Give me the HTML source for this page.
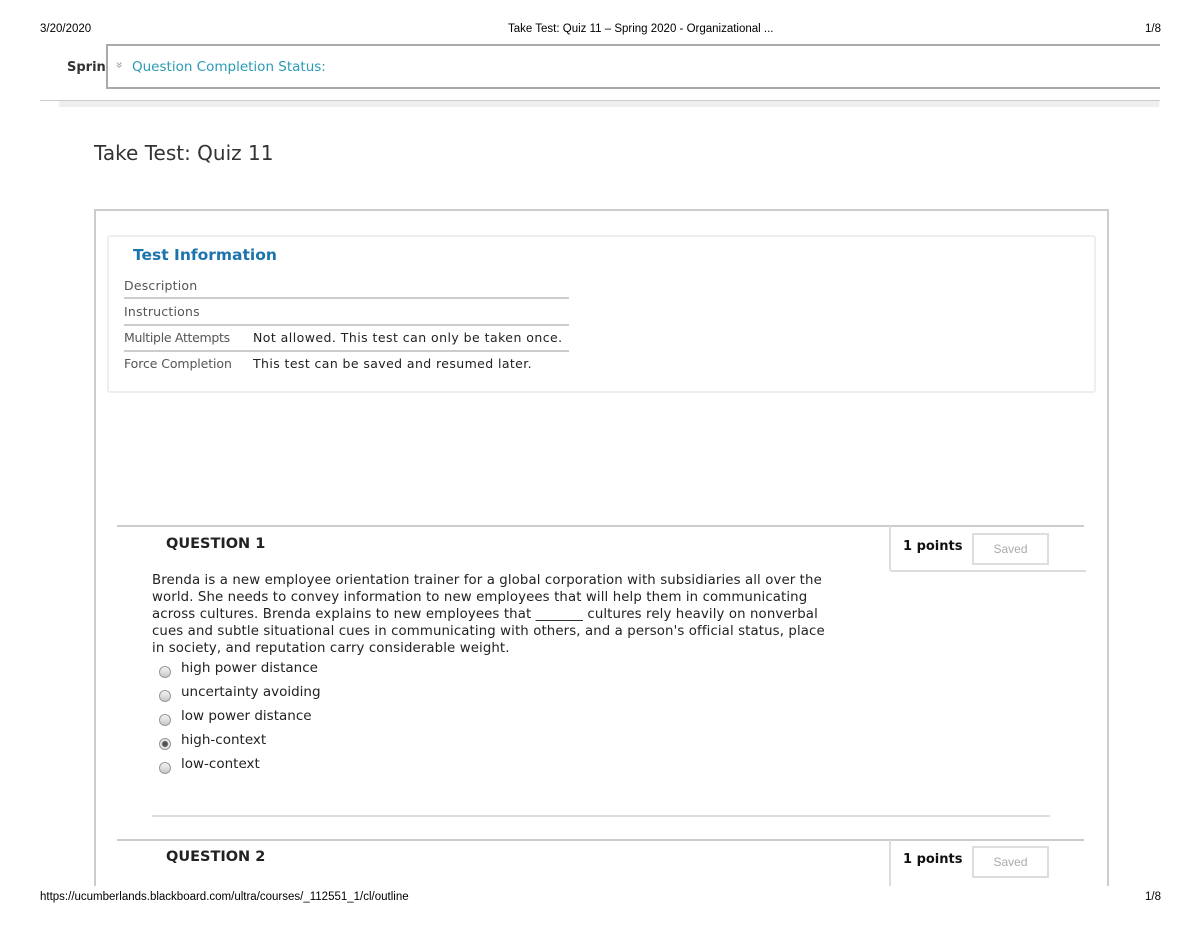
<!DOCTYPE html>
<html><head><style>
html,body{margin:0;width:1200px;height:927px;overflow:hidden}
body{position:relative;background:#fff;font-family:"DejaVu Sans","Liberation Sans",sans-serif}
.a{position:absolute;white-space:nowrap}
.hd{font-family:"Liberation Sans",sans-serif;font-size:11.5px;color:#000}
.r{position:absolute;width:10px;height:10px;border-radius:50%;border:1px solid #999;background:linear-gradient(#f4f4f4,#c8c8c8)}
.opt{font-size:13.5px;color:#222}
.q{font-size:13.3px;color:#222;letter-spacing:0.12px;line-height:17px}
.lbl{font-size:12.5px;color:#555;letter-spacing:0.2px}
.val{font-size:12.5px;color:#222}
</style></head><body>
<div class="a hd" style="left:40px;top:23px">3/20/2020</div>
<div class="a hd" style="left:508px;top:23px">Take Test: Quiz 11 – Spring 2020 - Organizational ...</div>
<div class="a hd" style="left:1145px;top:23px">1/8</div>
<div class="a" style="left:67px;top:60px;font-weight:bold;font-size:13px;color:#333">Sprin</div>
<div class="a" style="left:106px;top:44px;width:1052px;height:41px;border:2px solid #aaa;border-right:none;background:#fff"></div>
<div class="a" style="left:116px;top:58px;font-size:12px;color:#999;transform:rotate(90deg)">»</div>
<div class="a" style="left:132px;top:59px;font-size:13.5px;color:#2a9bb5">Question Completion Status:</div>
<div class="a" style="left:40px;top:100px;width:1120px;height:1px;background:#ccc"></div>
<div class="a" style="left:59px;top:101px;width:1100px;height:6px;background:#eee"></div>
<div class="a" style="left:94px;top:141px;font-size:20px;color:#333">Take Test: Quiz 11</div>
<div class="a" style="left:94px;top:209px;width:1011px;height:700px;border:2px solid #ccc"></div>
<div class="a" style="left:107px;top:235px;width:985px;height:154px;border:2px solid #eee;border-radius:3px"></div>
<div class="a" style="left:133px;top:246px;font-size:15.5px;font-weight:bold;color:#1b74ad">Test Information</div>
<div class="a lbl" style="left:124px;top:278px">Description</div>
<div class="a" style="left:124px;top:297px;width:445px;height:2px;background:#ccc"></div>
<div class="a lbl" style="left:124px;top:304px">Instructions</div>
<div class="a" style="left:124px;top:324px;width:445px;height:2px;background:#ccc"></div>
<div class="a lbl" style="left:124px;top:330px;letter-spacing:-0.3px">Multiple Attempts</div>
<div class="a val" style="left:253px;top:330px;letter-spacing:0.45px">Not allowed. This test can only be taken once.</div>
<div class="a" style="left:124px;top:350px;width:445px;height:2px;background:#ccc"></div>
<div class="a lbl" style="left:124px;top:356px;letter-spacing:-0.1px">Force Completion</div>
<div class="a val" style="left:253px;top:356px;letter-spacing:0.4px">This test can be saved and resumed later.</div>

<div class="a" style="left:117px;top:525px;width:967px;height:2px;background:#ccc"></div>
<div class="a" style="left:166px;top:536px;font-size:14.5px;font-weight:bold;color:#222">QUESTION 1</div>
<div class="a" style="left:889px;top:526px;width:195px;height:44px;border-left:2px solid #ddd;border-bottom:2px solid #ddd;border-bottom-left-radius:3px"></div>
<div class="a" style="left:903px;top:539px;font-size:13px;font-weight:bold;color:#111">1 points</div>
<div class="a" style="left:972px;top:533px;width:73px;height:28px;border:2px solid #ddd;font-size:12px;color:#aaa;text-align:center;line-height:28px;font-family:'Liberation Sans',sans-serif">Saved</div>
<div class="a q" style="left:152px;top:572px">Brenda is a new employee orientation trainer for a global corporation with subsidiaries all over the<br>world. She needs to convey information to new employees that will help them in communicating<br>across cultures. Brenda explains to new employees that _______ cultures rely heavily on nonverbal<br>cues and subtle situational cues in communicating with others, and a person's official status, place<br>in society, and reputation carry considerable weight.</div>
<div class="r" style="left:159px;top:666px"></div><div class="a opt" style="left:181px;top:660px">high power distance</div>
<div class="r" style="left:159px;top:690px"></div><div class="a opt" style="left:181px;top:684px">uncertainty avoiding</div>
<div class="r" style="left:159px;top:714px"></div><div class="a opt" style="left:181px;top:708px">low power distance</div>
<div class="r" style="left:159px;top:738px;background:radial-gradient(circle,#555 0 2.5px,#eee 3.5px,#ccc)"></div><div class="a opt" style="left:181px;top:732px">high-context</div>
<div class="r" style="left:159px;top:762px"></div><div class="a opt" style="left:181px;top:756px">low-context</div>
<div class="a" style="left:152px;top:815px;width:898px;height:2px;background:#ddd"></div>
<div class="a" style="left:117px;top:839px;width:967px;height:2px;background:#ccc"></div>
<div class="a" style="left:166px;top:849px;font-size:14.5px;font-weight:bold;color:#222">QUESTION 2</div>
<div class="a" style="left:889px;top:840px;width:195px;height:50px;border-left:2px solid #ddd"></div>
<div class="a" style="left:903px;top:852px;font-size:13px;font-weight:bold;color:#111">1 points</div>
<div class="a" style="left:972px;top:846px;width:73px;height:28px;border:2px solid #ddd;font-size:12px;color:#aaa;text-align:center;line-height:28px;font-family:'Liberation Sans',sans-serif">Saved</div>
<div class="a" style="left:0;top:886px;width:1200px;height:41px;background:#fff"></div>
<div class="a hd" style="left:40px;top:891px">https://ucumberlands.blackboard.com/ultra/courses/_112551_1/cl/outline</div>
<div class="a hd" style="left:1145px;top:891px">1/8</div>
</body></html>
